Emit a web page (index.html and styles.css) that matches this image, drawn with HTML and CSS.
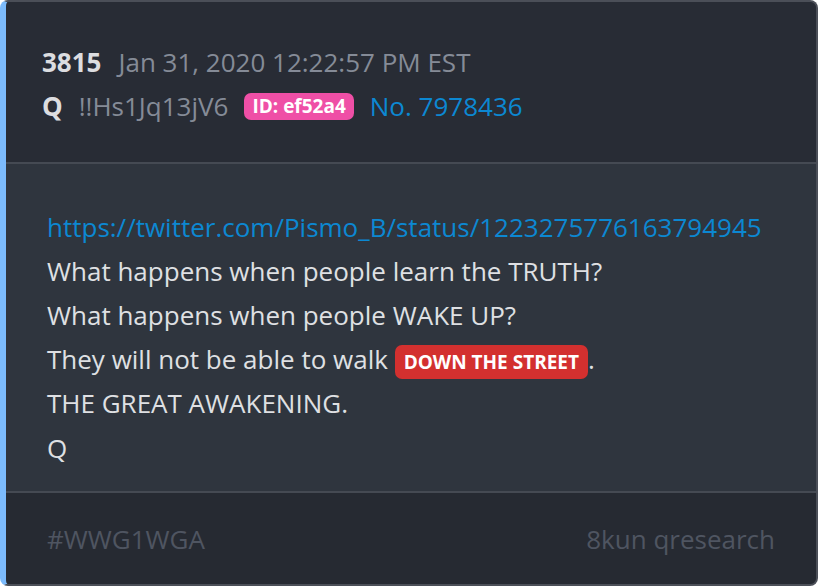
FILE: index.html
```html
<!doctype html>
<html lang="en">
<head>
    <meta charset="UTF-8">
    <title>Q Drop 3815</title>
    <link rel="stylesheet" href="styles.css">
</head>
<body>
    <article class="post">
        <header class="post--header">
            <div class="post--line">
                <span class="post--num">3815</span>
                <span class="post--date">Jan 31, 2020 12:22:57 PM EST</span>
            </div>
            <div class="post--line">
                <span class="post--author">Q</span>
                <span class="post--trip">!!Hs1Jq13jV6</span>
                <span class="post--id">ID: ef52a4</span>
                <span class="post--no">No. 7978436</span>
            </div>
        </header>
        <div class="post--body">
            <a class="post--link" href="#">https://twitter.com/Pismo_B/status/1223275776163794945</a>
            <p>What happens when people learn the TRUTH?</p>
            <p>What happens when people WAKE UP?</p>
            <p>They will not be able to walk <span class="post--mark">DOWN THE STREET</span>.</p>
            <p>THE GREAT AWAKENING.</p>
            <p>Q</p>
        </div>
        <footer class="post--footer">
            <span>#WWG1WGA</span>
            <span>8kun qresearch</span>
        </footer>
    </article>
</body>
</html>
```

FILE: styles.css
```css
html, body {
    margin: 0;
    background: #ffffff;
}

body {
    font-family: "Open Sans", sans-serif;
}

.post {
    box-sizing: border-box;
    height: 586px;
    display: flex;
    flex-direction: column;
    border: 2px solid #4b4f58;
    border-left: 6px solid #7cbbfc;
    border-radius: 8px;
    overflow: hidden;
    background: #2f353e;
}

.post--header {
    background: #282c35;
    padding: 38px 36px 34px;
    border-bottom: 2px solid #454a53;
}

.post--line {
    display: flex;
    align-items: center;
    gap: 16px;
    height: 44px;
    font-size: 26px;
}

.post--num,
.post--author {
    font-weight: 700;
    color: #dcdde0;
}

.post--num {
    margin-right: 1px;
}

.post--date,
.post--trip {
    color: #858b97;
}

.post--id {
    background: #ef4fa6;
    color: #ffffff;
    font-weight: 700;
    font-size: 19px;
    line-height: 27px;
    padding: 0 8px;
    border-radius: 7px;
}

.post--no {
    color: #0c88d2;
}

.post--body {
    padding: 41px 41px 21px;
    font-size: 26px;
    color: #dfe0e3;
    border-bottom: 2px solid #454a53;
}

.post--body p,
.post--link {
    display: block;
    margin: 0;
    line-height: 44px;
}

.post--body p:last-child {
    margin-top: 1px;
}

.post--link {
    color: #0c88d2;
    text-decoration: none;
}

.post--mark {
    background: #d3302f;
    color: #ffffff;
    font-weight: 700;
    font-size: 19px;
    line-height: 1;
    padding: 4px 9px;
    border-radius: 7px;
}

.post--footer {
    flex: 1;
    display: flex;
    align-items: center;
    justify-content: space-between;
    padding: 0 41px;
    background: #262a32;
    color: #4f5561;
    font-size: 26px;
}
```
